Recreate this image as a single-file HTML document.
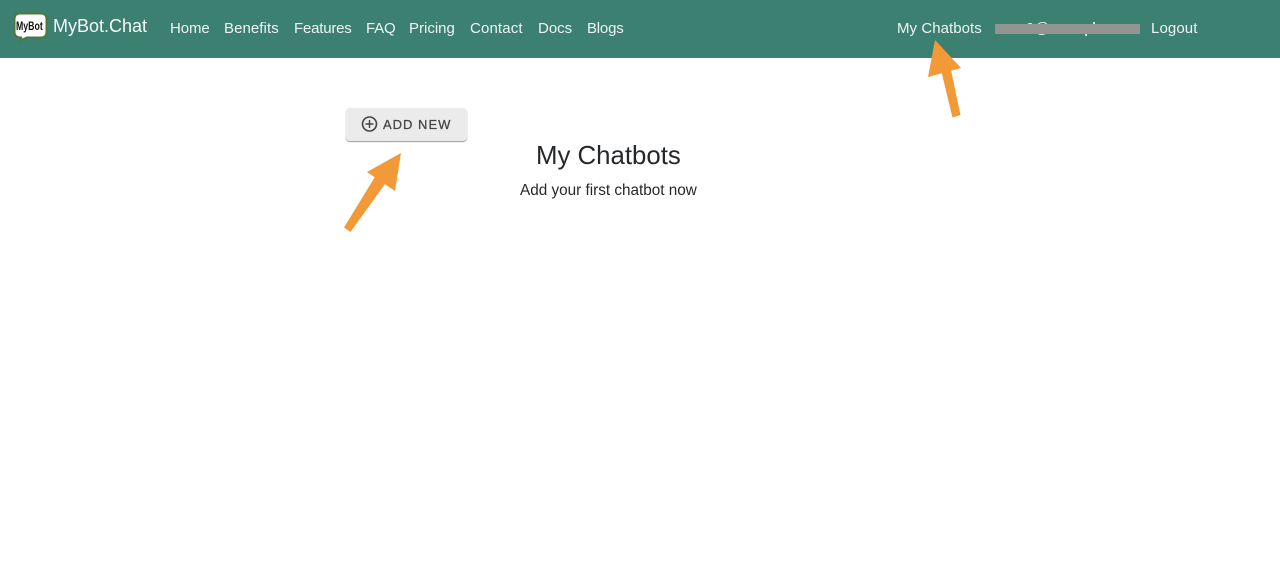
<!DOCTYPE html>
<html lang="en">
<head>
<meta charset="utf-8">
<title>My Chatbots</title>
<style>
html,body{margin:0;padding:0;background:#fff;}
body{width:1280px;height:568px;position:relative;overflow:hidden;font-family:"Liberation Sans",sans-serif;}
.nav{position:absolute;left:0;top:0;width:1280px;height:58px;background:#3b8071;}
.t{position:absolute;white-space:nowrap;line-height:20px;}
.l{color:#eef5f3;font-size:15px;top:18.5px;}
.brand{left:53px;top:15px;color:#f6faf9;font-size:18px;line-height:22px;}
.bar{position:absolute;left:995px;top:24px;width:145px;height:10px;background:#949494;}
.tick{position:absolute;background:#d5e4e0;}
.btn{position:absolute;left:346px;top:108px;width:121px;height:33px;background:#ebebeb;border-radius:4px;box-shadow:0 1px 1px rgba(0,0,0,.4);}
.btxt{left:383px;top:115px;color:#444;font-size:13px;font-weight:400;letter-spacing:1px;-webkit-text-stroke:.25px #444;}
h1{position:absolute;margin:0;left:536px;top:141px;font-size:25.8px;line-height:30px;font-weight:400;color:#25282b;white-space:nowrap;}
.sub{left:520px;top:180.5px;font-size:15.3px;color:#25282b;}
svg{position:absolute;left:0;top:0;}
</style>
</head>
<body>
<div class="nav"></div>
<svg width="1280" height="568" viewBox="0 0 1280 568">
<path d="M20 13.5 H41 Q46.5 13.5 46.5 19 V32 Q46.5 37.5 41 37.5 H27 L20.5 40 L21 37.5 Q14.5 37.5 14.5 32 V19 Q14.5 13.5 20 13.5Z" fill="#fff" stroke="#4d7a38" stroke-width="2"/>
<path d="M941.5 72 L951 70 L960.5 115 L952.5 117.5Z" fill="#f29a38"/>
<path d="M935 40 L961 68 L928 77Z" fill="#f29a38"/>
<path d="M344 227.5 L375.500 176 L385 184 L350.500 232Z" fill="#f29a38"/>
<path d="M401 153 L367 172 L395 191Z" fill="#f29a38"/>
</svg>
<div class="t" style="left:16px;top:16px;font-size:12px;font-weight:700;color:#111;transform:scaleX(.73);transform-origin:left;line-height:20px;">MyBot</div>
<div class="t brand">MyBot.Chat</div>
<div class="t l" style="left:170px;letter-spacing:-.1px">Home</div>
<div class="t l" style="left:224px;letter-spacing:.07px">Benefits</div>
<div class="t l" style="left:294px;letter-spacing:-.2px">Features</div>
<div class="t l" style="left:366px;letter-spacing:-.2px">FAQ</div>
<div class="t l" style="left:409px">Pricing</div>
<div class="t l" style="left:470px;letter-spacing:.14px">Contact</div>
<div class="t l" style="left:538px">Docs</div>
<div class="t l" style="left:587px;letter-spacing:-.2px">Blogs</div>
<div class="t l" style="left:897px;letter-spacing:.05px">My Chatbots</div>
<div class="t l" style="left:1026px">9@</div>
<div class="tick" style="left:1093px;top:22px;width:1.5px;height:2px"></div>
<div class="tick" style="left:1085px;top:34px;width:1.5px;height:2px"></div>
<div class="bar"></div>
<div class="t l" style="left:1151px;letter-spacing:.1px">Logout</div>
<div class="btn"></div>
<svg width="1280" height="568" viewBox="0 0 1280 568">
<circle cx="369.5" cy="124" r="7" fill="none" stroke="#444" stroke-width="1.6"/>
<path d="M369.5 120 V128 M365.5 124 H373.5" stroke="#444" stroke-width="1.4" fill="none"/>
</svg>
<div class="t btxt">ADD NEW</div>
<h1>My Chatbots</h1>
<div class="t sub">Add your first chatbot now</div>
</body>
</html>
